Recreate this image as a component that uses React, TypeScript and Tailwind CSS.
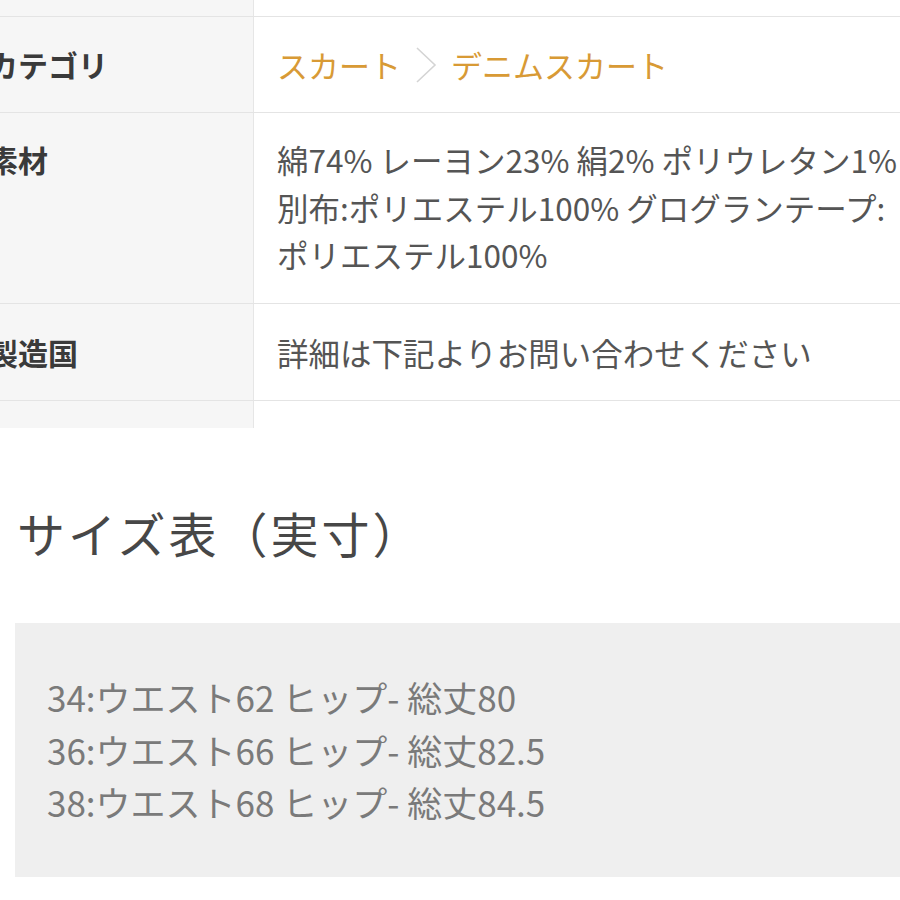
const Chevron = () => (
  <svg width="22" height="36" viewBox="0 0 22 36" className="mx-[14px] shrink-0">
    <polyline points="2,1 20,18 2,35" fill="none" stroke="#d4d4d4" strokeWidth="1.6" />
  </svg>
);

export default function App() {
  return (
    <div className="w-[900px] h-[900px] overflow-hidden bg-white font-['Noto_Sans_CJK_JP','Noto_Sans',sans-serif]">
      {/* spec table, cropped on the left */}
      <div className="-ml-[40px] w-[1000px]">
        <div className="flex border-b border-[#e4e4e4] h-[17px]">
          <div className="w-[294px] bg-[#f6f6f6] border-r border-[#e6e6e6]" />
          <div className="flex-1" />
        </div>

        <div className="flex border-b border-[#e4e4e4] h-[96px]">
          <div className="w-[294px] bg-[#f6f6f6] border-r border-[#e6e6e6] pl-[28px] pt-[24px] text-[30px] leading-[47px] font-bold text-[#3a3a3a]">
            カテゴリ
          </div>
          <div className="flex-1 pl-[23px] pt-[24px] flex items-start text-[31px] leading-[47px] text-[#d89a35]">
            <span>スカート</span>
            <div className="h-[47px] flex items-center">
              <Chevron />
            </div>
            <span>デニムスカート</span>
          </div>
        </div>

        <div className="flex border-b border-[#e4e4e4] h-[191px]">
          <div className="w-[294px] bg-[#f6f6f6] border-r border-[#e6e6e6] pl-[28px] pt-[23px] text-[30px] leading-[47px] font-bold text-[#3a3a3a]">
            素材
          </div>
          <div className="flex-1 pl-[23px] pt-[23px] text-[31.5px] leading-[47.5px] text-[#555] whitespace-nowrap">
            <div>綿74% レーヨン23% 絹2% ポリウレタン1%</div>
            <div>別布:ポリエステル100% グログランテープ:</div>
            <div>ポリエステル100%</div>
          </div>
        </div>

        <div className="flex border-b border-[#e4e4e4] h-[97px]">
          <div className="w-[294px] bg-[#f6f6f6] border-r border-[#e6e6e6] pl-[28px] pt-[25px] text-[30px] leading-[47px] font-bold text-[#3a3a3a]">
            製造国
          </div>
          <div className="flex-1 pl-[23px] pt-[25px] text-[31.5px] leading-[47px] text-[#555] whitespace-nowrap">
            詳細は下記よりお問い合わせください
          </div>
        </div>

        <div className="flex h-[27px]">
          <div className="w-[294px] bg-[#f6f6f6] border-r border-[#e6e6e6]" />
          <div className="flex-1" />
        </div>
      </div>

      {/* size chart */}
      <h2 className="mt-[74px] pl-[17px] text-[48px] leading-[60px] tracking-[3px] font-normal text-[#474747]">
        サイズ表（実寸）
      </h2>

      <div className="mt-[61px] ml-[15px] h-[254px] bg-[#efefef] pl-[32px] pt-[48px] text-[35px] leading-[52.5px] text-[#7a7a7a] whitespace-nowrap">
        <div>34:ウエスト62 ヒップ- 総丈80</div>
        <div>36:ウエスト66 ヒップ- 総丈82.5</div>
        <div>38:ウエスト68 ヒップ- 総丈84.5</div>
      </div>
    </div>
  );
}
